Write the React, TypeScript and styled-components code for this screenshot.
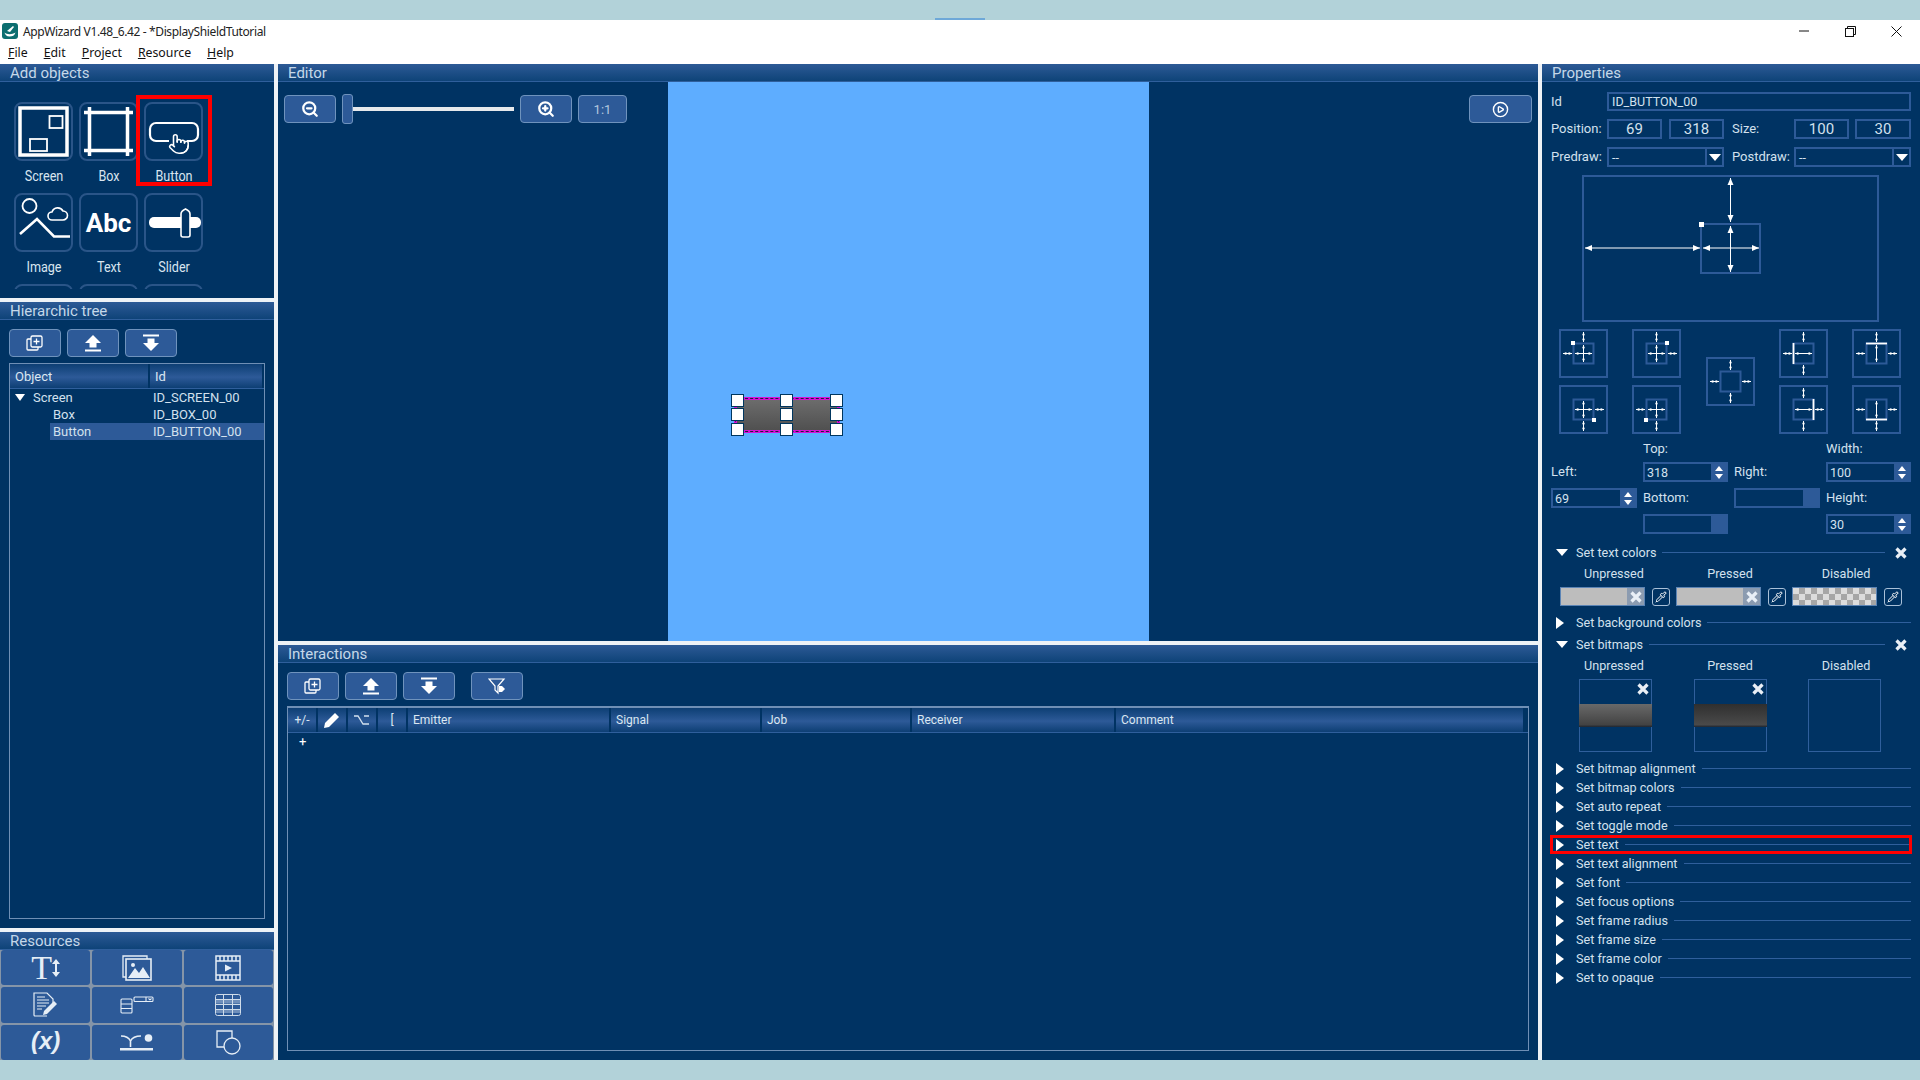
import React from "react";
import styled, { createGlobalStyle } from "styled-components";
import { ZoomIn, ZoomOut, CirclePlay, Pipette, Pointer } from "lucide-react";

const NAVY = "#003363";
const BLUE = "#2d5a98";
const EDGE = "#6f93bd";
const TEXT = "#d3e1ee";

const Global = createGlobalStyle`
  html, body { margin: 0; padding: 0; background: #b2d2d9; }
  * { box-sizing: border-box; }
  #root { width: 1920px; height: 1080px; overflow: hidden; }
`;

const Page = styled.div`
  width: 1920px; height: 1080px; display: flex; flex-direction: column;
  font-family: Roboto, "Liberation Sans", sans-serif; font-size: 13px; color: ${TEXT};
`;
const TopBand = styled.div`
  height: 20px; background: #b2d2d9; display: flex; justify-content: center; align-items: flex-end;
`;
const TaskMark = styled.div` width: 50px; height: 2px; background: #6ea8d8; `;
const TitleBar = styled.div`
  height: 20px; background: #fff; display: flex; align-items: center; color: #222;
  font-family: "Noto Sans", "Open Sans", sans-serif; font-size: 12px; padding: 2px 0 0 2px; line-height: 16px;
`;
const TitleText = styled.span` margin-left: 5px; flex: 1; padding-top: 2px; letter-spacing: -0.37px; `;
const WinButton = styled.div`
  width: 46px; height: 20px; display: flex; align-items: center; justify-content: center;
`;
const WinButtons = styled.div` display: flex; margin-right: 1px; `;
const MenuBar = styled.div`
  height: 24px; background: #fff; display: flex; align-items: center; gap: 16px; padding-left: 8px;
  color: #111; font-family: "Noto Sans", "Open Sans", sans-serif; font-size: 12.3px;
`;
const Main = styled.div`
  flex: 1; display: flex; gap: 4px; background: #eef2f6; height: 996px; min-height: 0;
`;
const Column = styled.div<{ $w: number }>`
  width: ${p => p.$w}px; display: flex; flex-direction: column; gap: 4px; flex: none;
`;
const Panel = styled.section<{ $h: number }>`
  height: ${p => p.$h}px; background: ${NAVY}; display: flex; flex-direction: column; flex: none; overflow: hidden;
`;
const PanelHead = styled.header`
  height: 18px; flex: none; padding-left: 10px; font-size: 15px; line-height: 19px; color: #c5d8e9;
  background: linear-gradient(#2d5a96, #0e4378); border-bottom: 1px solid #2f5f9c;
`;
const BottomBand = styled.div` height: 20px; background: #b2d2d9; flex: none; `;

const TileViewport = styled.div`
  height: 207px; padding: 20px 0 0 14px; overflow: hidden; flex: none;
`;
const TileGrid = styled.div`
  display: grid; grid-template-columns: repeat(3, 59px); column-gap: 6px; row-gap: 8px;
`;
const TileCell = styled.div` position: relative; `;
const Tile = styled.div`
  width: 59px; height: 59px; border: 2px solid #2a5588; border-radius: 8px; display: flex;
  align-items: center; justify-content: center; color: #fff; font-weight: 700; font-size: 26px;
  font-family: Roboto, sans-serif;
`;
const TileLabel = styled.div`
  margin: 6px 0 0 1px; height: 18px; line-height: 18px; text-align: center; font-size: 14px;
  transform: scaleX(0.9); color: #d9e5f0;
`;
const RedFrame = styled.div`
  position: absolute; left: -8px; top: -7px; width: 76px; height: 91px; border: 4px solid #f00;
`;

const Toolbar = styled.div<{ $top: number }>`
  display: flex; gap: 6px; padding: ${p => p.$top}px 0 0 9px; flex: none;
`;
const ToolButton = styled.button<{ $w?: number; $ml?: number }>`
  width: ${p => p.$w ?? 52}px; height: 28px; border-radius: 4px; background: ${BLUE}; border: 1px solid ${EDGE};
  display: flex; align-items: center; justify-content: center; padding: 0; color: #fff; font: 13px Roboto, sans-serif;
  margin-left: ${p => p.$ml ?? 0}px; flex: none;
`;
const DimLabel = styled.span` color: #b4c8df; `;

const TreeTable = styled.div`
  margin: 6px 9px 0; height: 556px; border: 1px solid #6f8fb5; display: flex; flex-direction: column;
`;
const HeadRow = styled.div<{ $cols: string; $small?: boolean }>`
  height: 25px; display: grid; grid-template-columns: ${p => p.$cols}; flex: none;
  border-bottom: 1px solid #2f5f9c; font-size: ${p => (p.$small ? 12 : 13)}px;
`;
const HeadCell = styled.div<{ $center?: boolean; $pad?: number }>`
  display: flex; align-items: center; color: #dbe7f2; font-size: inherit;
  justify-content: ${p => (p.$center ? "center" : "flex-start")};
  padding-left: ${p => (p.$center ? 0 : p.$pad ?? 5)}px;
  background: linear-gradient(#0d3f74, #2d5a98 55%, #0d3f74); border-right: 2px solid #003363;
`;
const TreeBody = styled.div``;
const TreeRow = styled.div<{ $ml: number; $sel?: boolean }>`
  height: 17px; margin-left: ${p => p.$ml}px; display: flex; align-items: center; font-size: 13px;
  background: ${p => (p.$sel ? BLUE : "transparent")};
  padding-left: ${p => (p.$ml > 0 ? 3 : 0)}px;
`;
const TreeName = styled.span<{ $w: number }>` width: ${p => p.$w}px; `;
const Collapse = styled.span`
  width: 0; height: 0; border-left: 5.5px solid transparent; border-right: 5.5px solid transparent;
  border-top: 7px solid #fff; margin: 0 8px 0 5px;
`;

const ResGrid = styled.div`
  flex: 1; display: grid; grid-template-columns: repeat(3, 1fr); grid-template-rows: repeat(3, 1fr);
  gap: 2px; background: #8595a8; padding: 0 1px 0 1px;
`;
const ResCell = styled.button`
  background: ${BLUE}; border: 0; padding: 0; display: flex; align-items: center; justify-content: center;
  border-radius: 3px; color: #e6eef6; gap: 0;
`;
const SerifT = styled.span`
  font-family: "Liberation Serif", serif; font-size: 34px; line-height: 34px; color: #e6eef6;
`;
const VarText = styled.span`
  font-family: "Liberation Sans", sans-serif; font-style: italic; font-weight: 700; font-size: 24px; color: #e6eef6;
  line-height: 24px; margin-bottom: 3px;
`;

const EditorBody = styled.div` flex: 1; display: flex; min-height: 0; `;
const EditorTools = styled.div`
  width: 390px; flex: none; display: flex; align-items: flex-start; padding: 13px 0 0 6px;
`;
const ZoomRail = styled.div` display: flex; align-items: center; height: 28px; margin-left: 6px; margin-right: 6px; `;
const ZoomHandle = styled.div`
  width: 11px; height: 30px; background: ${BLUE}; border: 1px solid ${EDGE}; border-radius: 3px; flex: none;
`;
const ZoomTrack = styled.div` width: 161px; height: 4px; background: #e6e9ec; `;
const Canvas = styled.div` width: 481px; flex: none; background: #5eadff; position: relative; `;
const Widget = styled.div`
  position: absolute; left: 69px; top: 318px; width: 100px; height: 30px;
  background: linear-gradient(#6c6c6c, #505050); outline: 3px solid #d80fd8;
  &::before {
    content: ""; position: absolute; inset: -2px; border: 1px dashed #1a2238;
  }
`;
const Handle = styled.span<{ $x: number; $y: number }>`
  position: absolute; width: 13px; height: 13px; background: #fff; border: 1px solid #00365f;
  left: ${p => p.$x - 6}px; top: ${p => p.$y - 6}px;
`;
const EditorRight = styled.div`
  flex: 1; display: flex; justify-content: flex-end; padding: 13px 6px 0 0; align-items: flex-start;
`;

const InterTable = styled.div`
  margin: 6px 9px 0; height: 345px; border: 1px solid #6f8fb5; border-top: 2px solid #6f8fb5;
`;
const PlusRow = styled.div` padding: 0 0 0 11px; font-size: 13px; line-height: 17px; color: #fff; `;

const PropsBody = styled.div` padding: 10px 9px 0; display: flex; flex-direction: column; flex: 1; `;
const FieldRow = styled.div<{ $mt?: number }>`
  display: flex; align-items: stretch; margin-top: ${p => p.$mt ?? 8}px;
`;
const RowLabel = styled.span<{ $w: number; $ml?: number }>`
  width: ${p => p.$w}px; flex: none; display: flex; align-items: center; font-size: 13px; padding-bottom: 1px;
  margin-left: ${p => p.$ml ?? 0}px;
`;
const Field = styled.div<{ $w?: number; $h: number; $big?: boolean; $ml?: number }>`
  width: ${p => (p.$w ? p.$w + "px" : "auto")}; flex: ${p => (p.$w ? "none" : 1)}; height: ${p => p.$h}px;
  border: 2px solid ${BLUE}; display: flex; align-items: center; margin-left: ${p => p.$ml ?? 0}px;
  justify-content: ${p => (p.$big ? "center" : "flex-start")};
  font-size: ${p => (p.$big ? 15 : 12.5)}px; padding-left: ${p => (p.$big ? 0 : 3)}px;
`;
const SelectBox = styled(Field)` position: relative; padding-right: 0; justify-content: space-between; `;
const SelectArrow = styled.span`
  width: 17px; height: 100%; border-left: 2px solid ${BLUE}; display: flex; align-items: center; justify-content: center;
  &::after { content: ""; border-left: 6px solid transparent; border-right: 6px solid transparent; border-top: 7px solid #fff; }
`;
const Diagram = styled.div`
  width: 297px; height: 147px; margin: 8px 0 0 31px; border: 2px solid ${BLUE}; flex: none;
`;
const AnchorGrid = styled.div`
  display: grid; grid-template-columns: repeat(5, 49px); grid-template-rows: repeat(2, 49px);
  column-gap: 24.25px; row-gap: 7px; margin: 7px 0 0 8px; flex: none;
`;
const AnchorTile = styled.div<{ $center?: boolean }>`
  width: 49px; height: 49px; border: 2px solid ${BLUE};
  ${p => (p.$center ? "grid-column: 3; grid-row: 1 / 3; align-self: center;" : "")}
`;
const SpinGrid = styled.div`
  display: grid; grid-template-columns: 86px 85px 86px 85px; grid-template-rows: repeat(4, 20px);
  column-gap: 6px; row-gap: 6px; margin-top: 2px; flex: none;
`;
const SpinLabel = styled.span<{ $end?: boolean }>`
  display: flex; align-items: ${p => (p.$end ? "flex-end" : "center")}; font-size: 13px;
  padding-bottom: ${p => (p.$end ? 0 : 1)}px;
`;
const Spin = styled.div`
  border: 2px solid ${BLUE}; display: flex; align-items: center; font-size: 12.5px; padding-left: 2px;
`;
const SpinValue = styled.span` flex: 1; `;
const SpinArrows = styled.div`
  width: 15px; height: 100%; background: ${BLUE}; display: flex; flex-direction: column; align-items: center;
  justify-content: center; gap: 3px; flex: none;
`;
const Up = styled.i` border-left: 4px solid transparent; border-right: 4px solid transparent; border-bottom: 5px solid #fff; `;
const Down = styled.i` border-left: 4px solid transparent; border-right: 4px solid transparent; border-top: 5px solid #fff; `;

const SectionRow = styled.div<{ $mt?: number }>`
  height: 19px; display: flex; align-items: center; position: relative; margin-top: ${p => p.$mt ?? 0}px; flex: none;
  font-size: 12.6px;
`;
const TriBox = styled.span` width: 20px; margin-left: 5px; display: flex; align-items: center; flex: none; `;
const TriDown = styled.i` border-left: 6px solid transparent; border-right: 6px solid transparent; border-top: 7px solid #fff; `;
const TriRight = styled.i` border-top: 6px solid transparent; border-bottom: 6px solid transparent; border-left: 8px solid #fff; `;
const SectionLine = styled.span` flex: 1; height: 1px; background: #2f5f9c; margin-left: 6px; `;
const SectionClose = styled.span` margin: 0 4px 0 10px; display: flex; `;
const RedRow = styled.div`
  position: absolute; left: -1px; right: -1px; top: 0; bottom: 0; border: 3px solid #f00;
`;
const StateLabels = styled.div`
  display: grid; grid-template-columns: repeat(3, 116px); margin-left: 9px; height: 21px; flex: none;
`;
const StateLabel = styled.span` width: 108px; text-align: center; line-height: 21px; font-size: 12.6px; padding-top: 1px; `;
const SwatchRow = styled.div`
  display: grid; grid-template-columns: repeat(3, 116px); margin: 4px 0 7px 9px; height: 19px; flex: none;
`;
const SwatchGroup = styled.div` display: flex; gap: 7px; align-items: center; `;
const Swatch = styled.div<{ $checker?: boolean }>`
  width: 85px; height: 19px; border: 1px solid #5b84b5; display: flex; justify-content: flex-end;
  background: ${p => (p.$checker
    ? "repeating-conic-gradient(#a6a6a6 0 25%, #dcdcdc 0 50%) 0 0 / 12px 12px"
    : "#bdbdbd")};
`;
const SwatchClear = styled.span`
  width: 17px; height: 100%; background: #8b9bb0; display: flex; align-items: center; justify-content: center;
`;
const EyeButton = styled.span`
  width: 18px; height: 18px; border: 1px solid #a9c0d8; border-radius: 3px; display: flex; align-items: center;
  justify-content: center; color: #fff;
`;
const BitmapRow = styled.div`
  display: grid; grid-template-columns: 73px 73px 73px; column-gap: 41.5px; margin: 4px 0 7px 28px; flex: none;
`;
const BitmapBox = styled.div`
  width: 73px; height: 73px; border: 1px solid #2f5f9c; position: relative; display: flex; align-items: center;
`;
const BitmapClose = styled.span` position: absolute; top: 3px; right: 2px; display: flex; `;
const BitmapBar = styled.div<{ $pressed?: boolean }>`
  width: 73px; height: 23px; flex: none; margin-left: -1px;
  background: ${p => (p.$pressed
    ? "linear-gradient(#2f2f2f, #4a4a4a 90%, #1d2530)"
    : "linear-gradient(#696969, #434343 90%, #1d2530)")};
`;

const Close = ({ s = 12 }: { s?: number }) => (
  <svg width={s} height={s} viewBox="0 0 12 12"><path d="M1.500 1.500l9 9M10.500 1.500l-9 9" stroke="#e9eff6" strokeWidth="3.2" /></svg>
);
const CopyPlusIcon = () => (
  <svg width="18" height="18" viewBox="0 0 18 18" fill="none" stroke="#fff" strokeWidth="1.3">
    <path d="M5 5H2a1 1 0 0 0-1 1v9a1 1 0 0 0 1 1h9a1 1 0 0 0 1-1v-3" />
    <rect x="5" y="2" width="11" height="11" rx="1.5" fill="#2d5a98" />
    <path d="M10.500 4.500v6M7.500 7.500h6" />
  </svg>
);
const UpIcon = () => (
  <svg width="18" height="18" viewBox="0 0 18 18" fill="#fff"><path d="M9 1L17 9H12.500V13.500H5.500V9H1Z" /><rect x="1" y="15.500" width="16" height="2" /></svg>
);
const DownIcon = () => (
  <svg width="18" height="18" viewBox="0 0 18 18" fill="#fff"><rect x="1" y="0.500" width="16" height="2" /><path d="M9 17L1 9H5.500V4.500H12.500V9H17Z" /></svg>
);
const FilterIcon = () => (
  <svg width="18" height="18" viewBox="0 0 18 18" fill="none" stroke="#fff" strokeWidth="1.2">
    <path d="M1 2h15l-6 7v7l-3-3V9z" />
    <path d="M11 9h3l3 3-3 3h-3z" fill="#fff" stroke="none" />
  </svg>
);

const ScreenIcon = () => (
  <svg width="55" height="55" viewBox="0 0 55 55" fill="none" stroke="#fff">
    <rect x="4" y="4" width="47" height="47" strokeWidth="3.5" />
    <rect x="33.500" y="12" width="13" height="12" strokeWidth="1.8" />
    <rect x="14" y="35" width="17" height="12" strokeWidth="1.8" />
  </svg>
);
const BoxIcon = () => (
  <svg width="55" height="55" viewBox="0 0 55 55" fill="none" stroke="#fff" strokeWidth="3.5">
    <path d="M3 8.500h49M3 46.500h49M8.500 3v49M46.500 3v49" />
  </svg>
);
const ButtonIcon = () => (
  <svg width="55" height="55" viewBox="0 0 55 55" fill="none" stroke="#fff">
    <path d="M23 37H10a6 6 0 0 1-6-6V25a6 6 0 0 1 6-6H46a6 6 0 0 1 6 6v6a6 6 0 0 1-6 6H41" strokeWidth="2.2" />
    <Pointer x="22" y="27" width="22" height="26" strokeWidth="1.7" color="#fff" />
  </svg>
);
const ImageIcon = () => (
  <svg width="55" height="55" viewBox="0 0 55 55" fill="none" stroke="#fff">
    <circle cx="13.500" cy="11" r="7" strokeWidth="1.8" />
    <path d="M4 39L21 24L38 41.500H54" strokeWidth="2.6" />
    <path d="M36 25a4 4 0 0 1 0-8 6 6 0 0 1 11-1 4.500 4.500 0 0 1 0 9z" strokeWidth="1.6" />
  </svg>
);
const SliderIcon = () => (
  <svg width="55" height="55" viewBox="0 0 55 55" stroke="#fff">
    <rect x="3" y="22" width="52" height="11" rx="5" fill="#fff" stroke="none" />
    <path d="M35 19Q35 16 39.500 14Q44 16 44 19V40Q44 42 42 42H37Q35 42 35 40Z" fill="#003363" strokeWidth="1.6" />
  </svg>
);

const Arrow = ({ x1, y1, x2, y2, a = 5 }: { x1: number; y1: number; x2: number; y2: number; a?: number }) => {
  const h = y1 === y2;
  const w = a * 0.85;
  return (
    <g fill="#fff" stroke="none">
      {h ? <rect x={x1} y={y1 - 0.5} width={x2 - x1} height={1} /> : <rect x={x1 - 0.5} y={y1} width={1} height={y2 - y1} />}
      {h ? (
        <>
          <path d={`M${x1} ${y1}l${a * 1.4} -${w * 0.7}v${w * 1.4}z`} />
          <path d={`M${x2} ${y2}l-${a * 1.4} -${w * 0.7}v${w * 1.4}z`} />
        </>
      ) : (
        <>
          <path d={`M${x1} ${y1}l-${w * 0.7} ${a * 1.4}h${w * 1.4}z`} />
          <path d={`M${x2} ${y2}l-${w * 0.7} -${a * 1.4}h${w * 1.4}z`} />
        </>
      )}
    </g>
  );
};

type Anchor = {
  dot?: [number, number]; bar?: [number, number, number, number];
  l?: boolean; r?: boolean; t?: boolean; b?: boolean; ih?: boolean; iv?: boolean;
};
const AnchorIcon = ({ dot, bar, l, r, t, b, ih, iv }: Anchor) => (
  <svg width="45" height="45" viewBox="0 0 45 45" style={{ display: "block" }}>
    <rect x="12.500" y="12.500" width="20" height="20" fill="none" stroke="#2d5a98" strokeWidth="2" />
    {l && <Arrow x1={2} y1={22.5} x2={11} y2={22.5} a={2.4} />}
    {r && <Arrow x1={34} y1={22.5} x2={43} y2={22.5} a={2.4} />}
    {t && <Arrow x1={22.5} y1={1} x2={22.5} y2={11} a={2.4} />}
    {b && <Arrow x1={22.5} y1={34} x2={22.5} y2={44} a={2.4} />}
    {ih && <Arrow x1={14} y1={22.5} x2={31} y2={22.5} a={2.4} />}
    {iv && <Arrow x1={22.5} y1={14} x2={22.5} y2={31} a={2.4} />}
    {dot && <rect x={dot[0] - 2} y={dot[1] - 2} width="4" height="4" fill="#fff" />}
    {bar && <path d={`M${bar[0]} ${bar[1]}L${bar[2]} ${bar[3]}`} stroke="#fff" strokeWidth="1.8" />}
  </svg>
);

const anchors: Anchor[] = [
  { dot: [12, 12], l: true, t: true, ih: true, iv: true },
  { dot: [33, 12], r: true, t: true, ih: true, iv: true },
  { l: true, r: true, t: true, b: true },
  { bar: [12.5, 12, 12.5, 33], l: true, t: true, b: true, ih: true },
  { bar: [12, 12.5, 33, 12.5], l: true, r: true, t: true, iv: true },
  { dot: [33, 33], r: true, b: true, ih: true, iv: true },
  { dot: [12, 33], l: true, b: true, ih: true, iv: true },
  { bar: [32.5, 12, 32.5, 33], r: true, t: true, b: true, ih: true },
  { bar: [12, 32.5, 33, 32.5], l: true, r: true, b: true, iv: true },
];

const sections = [
  "Set bitmap alignment", "Set bitmap colors", "Set auto repeat", "Set toggle mode", "Set text",
  "Set text alignment", "Set font", "Set focus options", "Set frame radius", "Set frame size",
  "Set frame color", "Set to opaque",
];

const Spinner = ({ v, off }: { v?: string; off?: boolean }) => (
  <Spin>
    <SpinValue>{v}</SpinValue>
    <SpinArrows>{!off && (<><Up /><Down /></>)}</SpinArrows>
  </Spin>
);

const ResIcons = () => (
  <ResGrid>
    <ResCell>
      <SerifT>T</SerifT>
      <svg width="8" height="18" viewBox="0 0 8 18" fill="#e6eef6"><path d="M4 0l4 5H5v8h3l-4 5-4-5h3V5H0z" /></svg>
    </ResCell>
    <ResCell>
      <svg width="30" height="26" viewBox="0 0 30 26" fill="none" stroke="#e6eef6" strokeWidth="1.3">
        <path d="M4 22H1V1h24v3" /><rect x="4" y="4" width="25" height="21" fill="#2d5a98" strokeWidth="1.6" />
        <path d="M6 23l7-10 4 5 4-6 7 11z" fill="#e6eef6" stroke="none" /><circle cx="11" cy="10" r="2" fill="#e6eef6" stroke="none" />
      </svg>
    </ResCell>
    <ResCell>
      <svg width="26" height="26" viewBox="0 0 26 26" fill="none" stroke="#e6eef6" strokeWidth="1.5">
        <rect x="1" y="1" width="24" height="24" /><path d="M1 6h24M1 20h24" />
        <path d="M5 1v5M9 1v5M13 1v5M17 1v5M21 1v5M5 20v5M9 20v5M13 20v5M17 20v5M21 20v5" />
        <path d="M10 9.500l7 3.500-7 3.500z" fill="#e6eef6" stroke="none" />
      </svg>
    </ResCell>
    <ResCell>
      <svg width="26" height="25" viewBox="0 0 26 25" fill="none" stroke="#e6eef6" strokeWidth="1.2">
        <path d="M14 24H2a1 1 0 0 1-1-1V1h13l6 6v4" /><path d="M4 5h8M4 8h12M4 11h12M4 14h9M4 17h5" />
        <path d="M10 23l1-4L21 9l3 3L14 22z" fill="#e6eef6" stroke="none" />
      </svg>
    </ResCell>
    <ResCell>
      <svg width="34" height="18" viewBox="0 0 34 18" fill="none" stroke="#e6eef6" strokeWidth="1.1">
        <rect x="1" y="3" width="11" height="14" rx="1" /><path d="M1 8h11M1 12.500h11" />
        <rect x="14" y="1" width="19" height="4.500" rx="1" /><path d="M26 1v4.500M28.500 2.500l1.500 1.300 1.500-1.300" />
      </svg>
    </ResCell>
    <ResCell>
      <svg width="26" height="22" viewBox="0 0 26 22" fill="none" stroke="#cfdcea" strokeWidth="1">
        <rect x="1" y="5.500" width="24" height="4" fill="#6f8fbb" stroke="none" /><rect x="1" y="15" width="24" height="4" fill="#6f8fbb" stroke="none" />
        <rect x="0.500" y="0.500" width="25" height="21" rx="2" /><path d="M0 5.500h26M0 10.500h26M0 15.500h26M8.500 0v22M17.500 0v22" />
      </svg>
    </ResCell>
    <ResCell><VarText>(x)</VarText></ResCell>
    <ResCell>
      <svg width="33" height="18" viewBox="0 0 33 18" fill="none" stroke="#e6eef6" strokeWidth="1.6">
        <path d="M1 3c5 0 8 2 9.500 5v6M21 3c-5 0-9 2-10.500 5" /><circle cx="28.500" cy="5" r="3.800" fill="#e6eef6" stroke="none" />
        <rect x="0" y="15" width="33" height="2.500" fill="#e6eef6" stroke="none" />
      </svg>
    </ResCell>
    <ResCell>
      <svg width="25" height="25" viewBox="0 0 25 25" fill="none" stroke="#e6eef6" strokeWidth="1.3">
        <path d="M8 17H1V1h15v7" /><circle cx="16" cy="16" r="8" />
      </svg>
    </ResCell>
  </ResGrid>
);

const tileItems: [string, React.ReactNode][] = [
  ["Screen", <ScreenIcon />], ["Box", <BoxIcon />], ["Button", <ButtonIcon />],
  ["Image", <ImageIcon />], ["Text", "Abc"], ["Slider", <SliderIcon />],
  ["", null], ["", null], ["", null],
];

const interCols = "30px 30px 30px 30px 203px 151px 150px 204px 409px";

export default function App() {
  return (
    <Page>
      <Global />
      <TopBand><TaskMark /></TopBand>
      <TitleBar>
        <svg width="16" height="16" viewBox="0 0 16 16">
          <rect width="16" height="16" rx="3" fill="#0c6e70" />
          <path d="M2.500 9.500c2 2 7 2.500 11 0-1 3-3 4-6 4s-4.500-2-5-4z" fill="#fff" />
          <path d="M5 8l6-5 1 1-4 5z" fill="#fff" />
        </svg>
        <TitleText>AppWizard V1.48_6.42 - *DisplayShieldTutorial</TitleText>
        <WinButtons>
          <WinButton><svg width="10" height="10" viewBox="0 0 10 10"><path d="M0 5h10" stroke="#111" /></svg></WinButton>
          <WinButton>
            <svg width="11" height="11" viewBox="0 0 11 11" fill="none" stroke="#111">
              <rect x="0.500" y="2.500" width="8" height="8" /><path d="M2.500 2.500v-2h8v8h-2" />
            </svg>
          </WinButton>
          <WinButton><svg width="11" height="11" viewBox="0 0 11 11"><path d="M0.500 0.500l10 10M10.500 0.500l-10 10" stroke="#111" /></svg></WinButton>
        </WinButtons>
      </TitleBar>
      <MenuBar>
        <span><u>F</u>ile</span><span><u>E</u>dit</span><span><u>P</u>roject</span><span><u>R</u>esource</span><span><u>H</u>elp</span>
      </MenuBar>
      <Main>
        <Column $w={274}>
          <Panel $h={234}>
            <PanelHead>Add objects</PanelHead>
            <TileViewport>
              <TileGrid>
                {tileItems.map(([label, icon], i) => (
                  <TileCell key={i}>
                    <Tile>{icon}</Tile>
                    <TileLabel>{label}</TileLabel>
                    {label === "Button" && <RedFrame />}
                  </TileCell>
                ))}
              </TileGrid>
            </TileViewport>
          </Panel>
          <Panel $h={626}>
            <PanelHead>Hierarchic tree</PanelHead>
            <Toolbar $top={9}>
              <ToolButton><CopyPlusIcon /></ToolButton>
              <ToolButton><UpIcon /></ToolButton>
              <ToolButton><DownIcon /></ToolButton>
            </Toolbar>
            <TreeTable>
              <HeadRow $cols="140px 1fr">
                <HeadCell>Object</HeadCell>
                <HeadCell>Id</HeadCell>
              </HeadRow>
              <TreeBody>
                <TreeRow $ml={0}><Collapse /><TreeName $w={120}>Screen</TreeName>ID_SCREEN_00</TreeRow>
                <TreeRow $ml={40}><TreeName $w={100}>Box</TreeName>ID_BOX_00</TreeRow>
                <TreeRow $ml={40} $sel><TreeName $w={100}>Button</TreeName>ID_BUTTON_00</TreeRow>
              </TreeBody>
            </TreeTable>
          </Panel>
          <Panel $h={128}>
            <PanelHead>Resources</PanelHead>
            <ResIcons />
          </Panel>
        </Column>
        <Column $w={1260}>
          <Panel $h={577}>
            <PanelHead>Editor</PanelHead>
            <EditorBody>
              <EditorTools>
                <ToolButton><ZoomOut size={18} strokeWidth={3} /></ToolButton>
                <ZoomRail><ZoomHandle /><ZoomTrack /></ZoomRail>
                <ToolButton><ZoomIn size={18} strokeWidth={3} /></ToolButton>
                <ToolButton $w={49} $ml={6}><DimLabel>1:1</DimLabel></ToolButton>
              </EditorTools>
              <Canvas>
                <Widget>
                  {[0, 49, 99].map(x =>
                    [0, 14, 29].map(y => <Handle key={`${x}-${y}`} $x={x} $y={y} />)
                  )}
                </Widget>
              </Canvas>
              <EditorRight>
                <ToolButton $w={63}><CirclePlay size={17} strokeWidth={2} /></ToolButton>
              </EditorRight>
            </EditorBody>
          </Panel>
          <Panel $h={415}>
            <PanelHead>Interactions</PanelHead>
            <Toolbar $top={9}>
              <ToolButton><CopyPlusIcon /></ToolButton>
              <ToolButton><UpIcon /></ToolButton>
              <ToolButton><DownIcon /></ToolButton>
              <ToolButton $ml={10}><FilterIcon /></ToolButton>
            </Toolbar>
            <InterTable>
              <HeadRow $cols={interCols} $small>
                <HeadCell $center>+/-</HeadCell>
                <HeadCell $center>
                  <svg width="16" height="16" viewBox="0 0 16 16" fill="#fff"><path d="M0 16l1-5L11 1l4 4L5 15z" /></svg>
                </HeadCell>
                <HeadCell $center>
                  <svg width="16" height="10" viewBox="0 0 16 10" fill="none" stroke="#d3e1ee" strokeWidth="1.3"><path d="M0 1h4l5 8h6M10 1h5" /></svg>
                </HeadCell>
                <HeadCell $center>[</HeadCell>
                <HeadCell>Emitter</HeadCell>
                <HeadCell>Signal</HeadCell>
                <HeadCell>Job</HeadCell>
                <HeadCell>Receiver</HeadCell>
                <HeadCell>Comment</HeadCell>
              </HeadRow>
              <PlusRow>+</PlusRow>
            </InterTable>
          </Panel>
        </Column>
        <Column $w={378}>
          <Panel $h={996}>
            <PanelHead>Properties</PanelHead>
            <PropsBody>
              <FieldRow $mt={0}><RowLabel $w={56}>Id</RowLabel><Field $h={19}>ID_BUTTON_00</Field></FieldRow>
              <FieldRow>
                <RowLabel $w={56}>Position:</RowLabel>
                <Field $w={55} $h={20} $big>69</Field>
                <Field $w={55} $h={20} $big $ml={7}>318</Field>
                <RowLabel $w={62} $ml={8}>Size:</RowLabel>
                <Field $w={55} $h={20} $big>100</Field>
                <Field $w={56} $h={20} $big $ml={6}>30</Field>
              </FieldRow>
              <FieldRow>
                <RowLabel $w={56}>Predraw:</RowLabel>
                <SelectBox $w={117} $h={20}>--<SelectArrow /></SelectBox>
                <RowLabel $w={62} $ml={8}>Postdraw:</RowLabel>
                <SelectBox $w={117} $h={20}>--<SelectArrow /></SelectBox>
              </FieldRow>
              <Diagram>
                <svg width="293" height="143" viewBox="0 0 293 143" style={{ display: "block" }}>
                  <rect x="117" y="47" width="59" height="49" fill="none" stroke="#2d5a98" strokeWidth="2" />
                  <Arrow x1={146.5} y1={1} x2={146.5} y2={45} />
                  <Arrow x1={146.5} y1={49} x2={146.5} y2={95} />
                  <Arrow x1={1} y1={71} x2={116} y2={71} />
                  <Arrow x1={119} y1={71} x2={175} y2={71} />
                  <rect x="115" y="45" width="5" height="5" fill="#fff" />
                </svg>
              </Diagram>
              <AnchorGrid>
                {anchors.map((a, i) => (
                  <AnchorTile key={i} $center={i === 2}><AnchorIcon {...a} /></AnchorTile>
                ))}
              </AnchorGrid>
              <SpinGrid>
                <span />
                <SpinLabel $end>Top:</SpinLabel>
                <span />
                <SpinLabel $end>Width:</SpinLabel>
                <SpinLabel>Left:</SpinLabel>
                <Spinner v="318" />
                <SpinLabel>Right:</SpinLabel>
                <Spinner v="100" />
                <Spinner v="69" />
                <SpinLabel>Bottom:</SpinLabel>
                <Spinner off />
                <SpinLabel>Height:</SpinLabel>
                <span />
                <Spinner off />
                <span />
                <Spinner v="30" />
              </SpinGrid>
              <SectionRow $mt={9}>
                <TriBox><TriDown /></TriBox>Set text colors<SectionLine /><SectionClose><Close /></SectionClose>
              </SectionRow>
              <StateLabels>
                <StateLabel>Unpressed</StateLabel><StateLabel>Pressed</StateLabel><StateLabel>Disabled</StateLabel>
              </StateLabels>
              <SwatchRow>
                <SwatchGroup><Swatch><SwatchClear><Close /></SwatchClear></Swatch><EyeButton><Pipette size={12} /></EyeButton></SwatchGroup>
                <SwatchGroup><Swatch><SwatchClear><Close /></SwatchClear></Swatch><EyeButton><Pipette size={12} /></EyeButton></SwatchGroup>
                <SwatchGroup><Swatch $checker /><EyeButton><Pipette size={12} /></EyeButton></SwatchGroup>
              </SwatchRow>
              <SectionRow>
                <TriBox><TriRight /></TriBox>Set background colors<SectionLine />
              </SectionRow>
              <SectionRow $mt={3}>
                <TriBox><TriDown /></TriBox>Set bitmaps<SectionLine /><SectionClose><Close /></SectionClose>
              </SectionRow>
              <StateLabels>
                <StateLabel>Unpressed</StateLabel><StateLabel>Pressed</StateLabel><StateLabel>Disabled</StateLabel>
              </StateLabels>
              <BitmapRow>
                <BitmapBox><BitmapClose><Close /></BitmapClose><BitmapBar /></BitmapBox>
                <BitmapBox><BitmapClose><Close /></BitmapClose><BitmapBar $pressed /></BitmapBox>
                <BitmapBox />
              </BitmapRow>
              {sections.map(s => (
                <SectionRow key={s}>
                  <TriBox><TriRight /></TriBox>{s}<SectionLine />
                  {s === "Set text" && <RedRow />}
                </SectionRow>
              ))}
            </PropsBody>
          </Panel>
        </Column>
      </Main>
      <BottomBand />
    </Page>
  );
}
